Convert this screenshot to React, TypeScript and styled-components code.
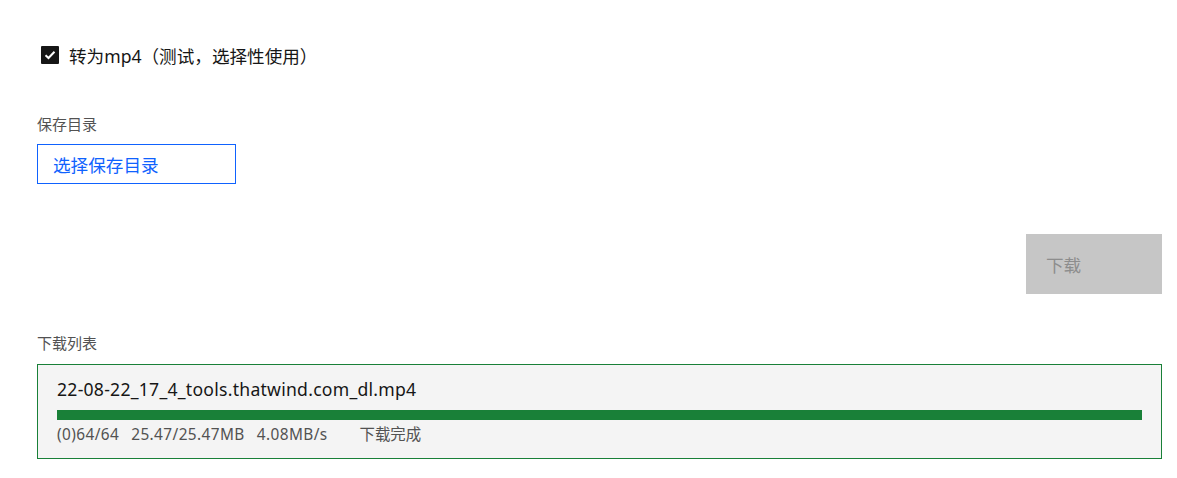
import React from "react";
import styled, { createGlobalStyle } from "styled-components";

const Global = createGlobalStyle`
  html, body { margin: 0; padding: 0; background: #ffffff; }
  body {
    font-family: "Noto Sans", "Noto Sans CJK SC", sans-serif;
    color: #161616;
  }
  * { box-sizing: border-box; }
`;

const Page = styled.div`
  padding: 41px 15px 19px 37px;
  display: flex;
  flex-direction: column;
`;

const CheckRow = styled.label`
  display: flex;
  align-items: center;
  gap: 10px;
  padding-left: 4px;
  height: 28px;
  font-size: 17.6px;
  color: #161616;
`;

const Box = styled.span`
  width: 18px;
  height: 18px;
  border-radius: 1px;
  background: #161616;
  display: flex;
  align-items: center;
  justify-content: center;
`;

const FieldLabel = styled.div<{ $top: number }>`
  font-size: 15px;
  color: #525252;
  height: 20px;
  line-height: 20px;
  margin-top: ${(p) => p.$top}px;
`;

const DirButton = styled.button`
  margin-top: 10px;
  width: 199px;
  height: 40px;
  border: 1px solid #0f62fe;
  background: #ffffff;
  color: #0f62fe;
  font-family: inherit;
  font-size: 17.6px;
  text-align: left;
  padding: 0 15px;
`;

const ActionRow = styled.div`
  display: flex;
  justify-content: flex-end;
  margin-top: 50px;
`;

const DownloadButton = styled.button`
  width: 136px;
  height: 60px;
  border: none;
  background: #c6c6c6;
  color: #8d8d8d;
  font-family: inherit;
  font-size: 17.6px;
  text-align: left;
  padding: 0 0 0 20px;
  cursor: not-allowed;
`;

const ListBox = styled.div`
  margin-top: 11px;
  border: 1px solid #198038;
  background: #f4f4f4;
  padding: 12px 19px 0 19px;
  height: 95px;
`;

const FileName = styled.div`
  font-size: 17.6px;
  letter-spacing: 0.25px;
  line-height: 24px;
  color: #161616;
`;

const Track = styled.div`
  margin-top: 9px;
  height: 10px;
  background: #e0e0e0;
`;

const Fill = styled.div`
  height: 100%;
  background: #198038;
`;

const Status = styled.div`
  display: flex;
  font-size: 15.4px;
  letter-spacing: 0.4px;
  line-height: 20px;
  margin-top: 5px;
  color: #525252;
`;

const Stat = styled.span<{ $gap: number }>`
  margin-right: ${(p) => p.$gap}px;
`;

const StatusText = styled.span`
  letter-spacing: 0;
`;

export default function App() {
  const progress = 100;
  return (
    <>
      <Global />
      <Page>
        <CheckRow>
          <Box>
            <svg width="12" height="10" viewBox="0 0 12 10">
              <path d="M1.5 5.2 L4.5 8 L10.5 1.8" fill="none" stroke="#fff" strokeWidth="2" />
            </svg>
          </Box>
          <span>转为mp4（测试，选择性使用）</span>
        </CheckRow>
        <FieldLabel $top={45}>保存目录</FieldLabel>
        <DirButton>选择保存目录</DirButton>
        <ActionRow>
          <DownloadButton disabled>下载</DownloadButton>
        </ActionRow>
        <FieldLabel $top={39}>下载列表</FieldLabel>
        <ListBox>
          <FileName>22-08-22_17_4_tools.thatwind.com_dl.mp4</FileName>
          <Track>
            <Fill style={{ width: `${progress}%` }} />
          </Track>
          <Status>
            <Stat $gap={12}>(0)64/64</Stat>
            <Stat $gap={12}>25.47/25.47MB</Stat>
            <Stat $gap={32}>4.08MB/s</Stat>
            <StatusText>下载完成</StatusText>
          </Status>
        </ListBox>
      </Page>
    </>
  );
}
